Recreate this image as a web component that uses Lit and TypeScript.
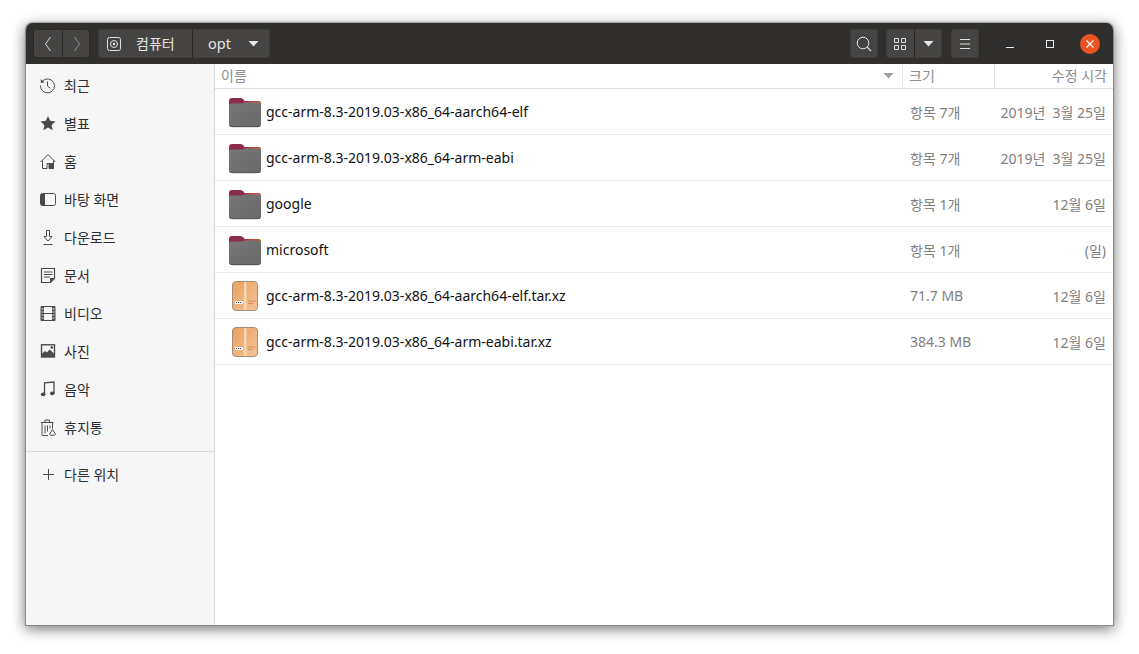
import { LitElement, html, css, svg } from "lit";
import { customElement } from "lit/decorators.js";

const sideIcons: Record<string, unknown> = {
  recent: svg`<path d="M2.400 3.100A7 7 0 1 1 .5 7.500" fill="none" stroke="#4a4a4a"/><path d="M7.500 3.500V8l2.800 2.200" fill="none" stroke="#4a4a4a"/><path d="M.8 1v3.800h3.800z" fill="#4a4a4a"/>`,
  star: svg`<path d="M8 0l2.200 4.800 5.300.6-3.900 3.600 1.100 5.200L8 11.600l-4.700 2.600L4.400 9 .5 5.400l5.300-.6z" fill="#4a4a4a"/>`,
  home: svg`<path d="M.5 8L8 .5 15.500 8M2.500 6.500v8h4.500v-5h2v5h4.500v-8" fill="none" stroke="#4a4a4a"/><rect x="9" y="9" width="5" height="6" fill="#4a4a4a"/>`,
  desk: svg`<rect x=".5" y="1.500" width="15" height="12" rx="2" fill="none" stroke="#4a4a4a"/><path d="M2.500 1.500H5v12H2.500a2 2 0 0 1-2-2v-8a2 2 0 0 1 2-2z" fill="#4a4a4a"/>`,
  down: svg`<path d="M6.500.5h3v6H12L8 11 4 6.500h2.500z" fill="none" stroke="#4a4a4a"/><path d="M3.500 14.500h9" stroke="#4a4a4a"/>`,
  doc: svg`<path d="M1.500 .5h13v10l-4 4h-9z" fill="none" stroke="#4a4a4a" stroke-width="1.200"/><path d="M4 4h8.500M4 6.500h8.500M4 9h6" stroke="#4a4a4a"/><path d="M10 14.500v-4.500h4.500z" fill="#4a4a4a"/>`,
  film: svg`<path d="M1 .5h14v14H1z" fill="none" stroke="#4a4a4a"/><path d="M1 .5h3v14H1zM12 .5h3v14h-3z" fill="#4a4a4a"/><path d="M4 7.500h8" stroke="#4a4a4a"/><path d="M1.500 3h2M1.500 6h2M1.500 9h2M1.500 12h2M12.500 3h2M12.500 6h2M12.500 9h2M12.500 12h2" stroke="#f6f6f6"/>`,
  photo: svg`<rect x="1.500" y=".8" width="13" height="12.200" fill="none" stroke="#4a4a4a" stroke-width="1.400"/><path d="M1.500 13V10l3.500-3 2 1.500L9.500 5.500 14.500 10v3z" fill="#4a4a4a"/><circle cx="11.800" cy="3.500" r="1.300" fill="#4a4a4a"/>`,
  music: svg`<path d="M4.500 12V.8L14 0v11" fill="none" stroke="#4a4a4a" stroke-width="1.300"/><ellipse cx="3.200" cy="12.300" rx="2.300" ry="1.900" fill="#4a4a4a"/><ellipse cx="12.300" cy="11.300" rx="2.300" ry="1.900" fill="#4a4a4a"/>`,
  trash: svg`<path d="M1 2.500h12.500M5 2V0h4.500v2M2 3v11.500a1 1 0 0 0 1 1h5M12.500 3v5.500M5 5.500v8M7.500 5.500v6M10 5.500v3" fill="none" stroke="#4a4a4a"/><path d="M12.500 9.500l2.700 4.200a1 1 0 0 1-.9 1.500h-3.600a1 1 0 0 1-.9-1.500z" fill="#f6f6f6" stroke="#4a4a4a"/>`,
  plus: svg`<path d="M8.500 2v11M3 7.500h11" stroke="#4a4a4a"/>`,
};

const places: [string, string][] = [
  ["recent", "최근"],
  ["star", "별표"],
  ["home", "홈"],
  ["desk", "바탕 화면"],
  ["down", "다운로드"],
  ["doc", "문서"],
  ["film", "비디오"],
  ["photo", "사진"],
  ["music", "음악"],
  ["trash", "휴지통"],
];

const files: [string, "folder" | "box", string, string][] = [
  ["gcc-arm-8.3-2019.03-x86_64-aarch64-elf", "folder", "항목 7개", "2019년  3월 25일"],
  ["gcc-arm-8.3-2019.03-x86_64-arm-eabi", "folder", "항목 7개", "2019년  3월 25일"],
  ["google", "folder", "항목 1개", "12월 6일"],
  ["microsoft", "folder", "항목 1개", "(일)"],
  ["gcc-arm-8.3-2019.03-x86_64-aarch64-elf.tar.xz", "box", "71.7 MB", "12월 6일"],
  ["gcc-arm-8.3-2019.03-x86_64-arm-eabi.tar.xz", "box", "384.3 MB", "12월 6일"],
];

const folderIcon = svg`<svg width="34" height="35" viewBox="0 0 34 35">
  <defs>
    <linearGradient id="fb" x1="0" y1="0" x2="1" y2="1"><stop offset="0" stop-color="#777"/><stop offset="1" stop-color="#696969"/></linearGradient>
    <linearGradient id="ft" x1="0" y1="0" x2="1" y2="0"><stop offset="0" stop-color="#a0304f"/><stop offset="1" stop-color="#d0642f"/></linearGradient>
  </defs>
  <path d="M1 7q0-3 3-3h8.500q2 0 3 1.500L16.500 7H30q3 0 3 3v4H1z" fill="#8b2c4b"/>
  <path d="M16 7h14q3 0 3 3v1H16z" fill="url(#ft)"/>
  <path d="M1 11q0-1.500 2-1.500h10q1.800 0 3-1h14.500q2.500 0 2.500 2.500v19q0 3-3 3H4q-3 0-3-3z" fill="url(#fb)"/>
  <path d="M1 30q0 3 3 3h26q3 0 3-3v-1q0 3-3 3H4q-3 0-3-3z" fill="#565656"/>
  <path d="M4 33.500h26" stroke="#000" stroke-opacity=".12"/>
</svg>`;

const boxIcon = svg`<svg width="34" height="35" viewBox="0 0 34 35">
  <defs>
    <linearGradient id="bb" x1="0" y1="0" x2="1" y2="1"><stop offset="0" stop-color="#eca05f"/><stop offset="1" stop-color="#f2c499"/></linearGradient>
  </defs>
  <rect x="4.500" y="3.500" width="25" height="29" rx="3.500" fill="url(#bb)" stroke="#a48d79"/>
  <rect x="16" y="4" width="2.500" height="28" fill="#f8d7b0"/>
  <rect x="7" y="23" width="8" height="3" fill="#fff"/>
  <path d="M8 24.500h1M10 24.500h1M12 24.500h1" stroke="#444"/>
  <path d="M20 23h8M20 25.500h5" stroke="#dc9154"/>
</svg>`;

@customElement("app-root")
export class AppRoot extends LitElement {
  static styles = css`
    :host {
      display: block;
      width: 1139px;
      height: 654px;
      background: #fff;
      padding: 23px 25px 28px;
      box-sizing: border-box;
      overflow: hidden;
      font-family: "Noto Sans", "Noto Sans CJK KR", sans-serif;
      font-size: 14px;
      color: #1a1a1a;
    }
    .window {
      height: 603px;
      display: flex;
      flex-direction: column;
      border-radius: 7px 7px 0 0;
      background: #fff;
      overflow: hidden;
      border: 1px solid #8a8a8a;
      border-top: 0;
      box-sizing: border-box;
    }
    .shadow {
      border-radius: 7px 7px 0 0;
      box-shadow: 0 3px 14px rgba(0, 0, 0, 0.55), 0 -1px 1px rgba(0, 0, 0, 0.25);
    }
    .titlebar {
      flex: 0 0 41px;
      height: 41px;
      background: #302f2e;
      display: flex;
      align-items: center;
      padding: 0 3px 0 7px;
      box-sizing: border-box;
      color: #e6e6e6;
    }
    .group {
      display: flex;
      height: 29px;
      border-radius: 4px;
      background: #454442;
      box-shadow: inset 0 0 0 1px #3c3b3a;
    }
    .group.navs { box-shadow: inset 0 0 0 1px #2a2928; }
    .group > * {
      display: flex;
      align-items: center;
      justify-content: center;
      height: 100%;
      box-sizing: border-box;
    }
    .sep { border-left: 1px solid #2a2928; }
    .nav { width: 29px; }
    .nav + .nav { width: 28px; }
    .path { margin-left: 8px; }
    .crumb1 { width: 94px; justify-content: flex-start; padding-left: 9px; gap: 15px; }
    .crumb1 span, .crumb2 span { font-size: 14px; line-height: 1; }
    .crumb2 { width: 78px; padding-left: 15px; justify-content: flex-start; gap: 17px; }
    .crumb2 span { font-size: 14.500px; }
    .spacer { flex: 1; }
    .btn { width: 28px; }
    .grp2 { margin-left: 8px; }
    .grp3 { margin-left: 9px; }
    .winbtns { display: flex; align-items: center; margin-left: 11px; }
    .winbtn { width: 40px; display: flex; justify-content: center; align-items: center; }
    .close {
      width: 20px; height: 20px; border-radius: 50%;
      background: #e95420;
      display: flex; align-items: center; justify-content: center;
    }
    .body { flex: 1; display: flex; min-height: 0; }
    aside {
      width: 189px;
      flex: none;
      background: #f6f6f6;
      border-right: 1px solid #d8d8d8;
      box-sizing: border-box;
      padding-top: 4px;
    }
    .place {
      height: 38px;
      display: flex;
      align-items: center;
      padding-left: 14px;
      gap: 8px;
      color: #2d2d2d;
    }
    .place svg { flex: none; overflow: visible; margin-bottom: 2px; }
    .place span { font-size: 14px; line-height: 1; margin-bottom: 2px; }
    aside hr {
      border: 0;
      border-top: 1px solid #d8d8d8;
      margin: 3px 0 5px;
    }
    main { flex: 1; min-width: 0; }
    .head, .row {
      display: grid;
      grid-template-columns: 687px 92px 119px;
    }
    .head {
      height: 25px;
      border-bottom: 1px solid #dcdcdc;
      box-sizing: border-box;
      color: #8d8d8d;
      font-size: 14px;
      line-height: 24px;
    }
    .head > div { box-sizing: border-box; border-left: 1px solid #e2e2e2; padding: 0 6px; display: flex; align-items: center; }
    .head > div:first-child { border-left: 0; justify-content: space-between; }
    .head > div:first-child svg { margin-right: 2px; }
    .head > div:last-child { justify-content: flex-end; }
    .row {
      height: 46px;
      border-bottom: 1px solid #ececec;
      box-sizing: border-box;
      align-items: center;
    }
    .name { display: flex; align-items: center; padding-left: 13px; gap: 4px; font-size: 14px; color: #111; }
    .name svg { flex: none; }
    .size { padding-left: 8px; color: #808080; font-size: 14px; }
    .date { text-align: right; padding-right: 7px; color: #808080; font-size: 14px; white-space: pre; }
  `;

  render() {
    return html`
      <div class="shadow">
        <div class="window">
          <div class="titlebar">
            <div class="group navs">
              <div class="nav"><svg width="12" height="18" viewBox="0 0 12 18"><path d="M8.500 2L3.500 9l5 7" fill="none" stroke="#d8d8d8"/></svg></div>
              <div class="nav sep"><svg width="12" height="18" viewBox="0 0 12 18"><path d="M3.500 2l5 7-5 7" fill="none" stroke="#8f8f8f"/></svg></div>
            </div>
            <div class="group path">
              <div class="crumb1">
                <svg width="14" height="16" viewBox="0 0 14 16"><rect x=".5" y="1.500" width="13" height="13" rx="2" fill="none" stroke="#e0e0e0"/><circle cx="7" cy="8" r="3.500" fill="none" stroke="#e0e0e0"/><circle cx="7" cy="8" r="1.200" fill="#e0e0e0"/></svg>
                <span>컴퓨터</span>
              </div>
              <div class="crumb2 sep">
                <span>opt</span>
                <svg width="11" height="6" viewBox="0 0 11 6"><path d="M.5 0h10l-5 5.500z" fill="#e6e6e6"/></svg>
              </div>
            </div>
            <div class="spacer"></div>
            <div class="group">
              <div class="btn"><svg width="16" height="16" viewBox="0 0 16 16"><circle cx="7" cy="7" r="5.800" fill="none" stroke="#e0e0e0"/><path d="M11.200 11.200L15 15" stroke="#e0e0e0" stroke-width="1.200"/></svg></div>
            </div>
            <div class="group grp2">
              <div class="btn"><svg width="14" height="14" viewBox="0 0 14 14"><path d="M1.500 1.500h4v4h-4zM8.500 1.500h4v4h-4zM1.500 8.500h4v4h-4zM8.500 8.500h4v4h-4z" fill="none" stroke="#e0e0e0"/></svg></div>
              <div class="btn sep"><svg width="11" height="6" viewBox="0 0 11 6"><path d="M.5 0h10l-5 5.500z" fill="#e6e6e6"/></svg></div>
            </div>
            <div class="group grp3">
              <div class="btn"><svg width="12" height="12" viewBox="0 0 12 12"><path d="M1 1.500h10M1 6h10M1 10.500h10" stroke="#e0e0e0"/></svg></div>
            </div>
            <div class="winbtns">
              <div class="winbtn"><svg width="10" height="10" viewBox="0 0 10 10"><path d="M1 8.500h8" stroke="#eee"/></svg></div>
              <div class="winbtn"><svg width="10" height="10" viewBox="0 0 10 10"><rect x="1.500" y="1.500" width="7" height="7" fill="none" stroke="#eee"/></svg></div>
              <div class="winbtn"><div class="close"><svg width="10" height="10" viewBox="0 0 10 10"><path d="M1.500 1.500l7 7M8.500 1.500l-7 7" stroke="#fff" stroke-width="1.200"/></svg></div></div>
            </div>
          </div>
          <div class="body">
            <aside>
              ${places.map(
                ([i, t]) => html`<div class="place"><svg width="16" height="16" viewBox="0 0 16 16">${sideIcons[i]}</svg><span>${t}</span></div>`
              )}
              <hr />
              <div class="place"><svg width="16" height="16" viewBox="0 0 16 16">${sideIcons.plus}</svg><span>다른 위치</span></div>
            </aside>
            <main>
              <div class="head">
                <div><span>이름</span><svg width="11" height="6" viewBox="0 0 11 6"><path d="M.5 0h10l-5 5.500z" fill="#a0a0a0"/></svg></div>
                <div>크기</div>
                <div>수정 시각</div>
              </div>
              ${files.map(
                ([n, k, s, d]) => html`<div class="row">
                  <div class="name">${k === "folder" ? folderIcon : boxIcon}<span>${n}</span></div>
                  <div class="size">${s}</div>
                  <div class="date">${d}</div>
                </div>`
              )}
            </main>
          </div>
        </div>
      </div>
    `;
  }
}
